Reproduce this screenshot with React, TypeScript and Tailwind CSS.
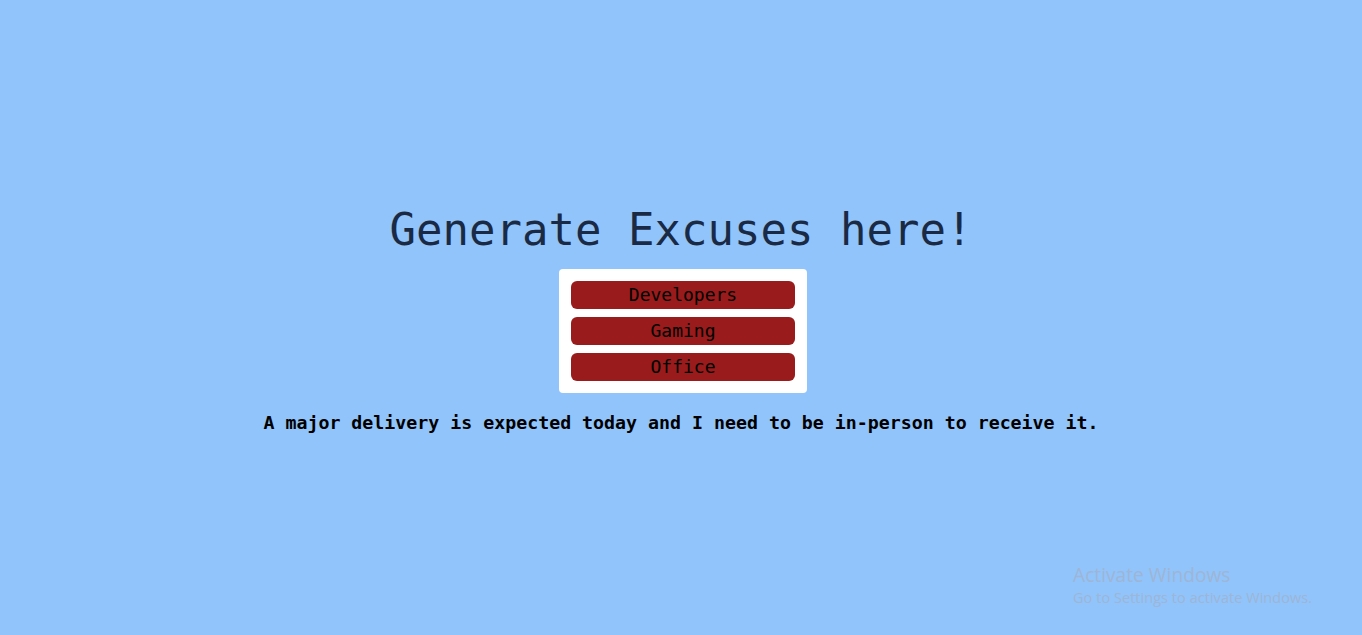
import { useState } from "react";

const excuses: Record<string, string> = {
  Developers: "It works on my machine, the bug must be in your environment.",
  Gaming: "My controller ran out of battery right at the final boss.",
  Office: "A major delivery is expected today and I need to be in-person to receive it.",
};

export default function App() {
  const [text, setText] = useState(excuses.Office);

  return (
    <div className="relative flex h-screen w-full flex-col items-center justify-center bg-[#90c4fb] pt-1 font-['DejaVu_Sans_Mono',monospace]">
      <h1 className="text-[44px] leading-[52px] text-[#1b2a44]">Generate Excuses here!</h1>
      <div className="ml-1 mt-[13px] flex w-[248px] flex-col gap-2 rounded bg-white p-3">
        {Object.keys(excuses).map((k) => (
          <button
            key={k}
            onClick={() => setText(excuses[k])}
            className="h-7 w-full rounded-md bg-[#991b1b] text-[18px] leading-7 text-black"
          >
            {k}
          </button>
        ))}
      </div>
      <p className="mt-[18px] text-[18.25px] font-bold leading-6 text-black">{text}</p>

      {/* windows watermark */}
      <div className="absolute left-[1073px] top-[563px] font-['Open_Sans',sans-serif] text-[#9fb5d5]">
        <div className="text-[19.2px] leading-6">Activate Windows</div>
        <div className="text-[14.6px] leading-5">Go to Settings to activate Windows.</div>
      </div>
    </div>
  );
}
